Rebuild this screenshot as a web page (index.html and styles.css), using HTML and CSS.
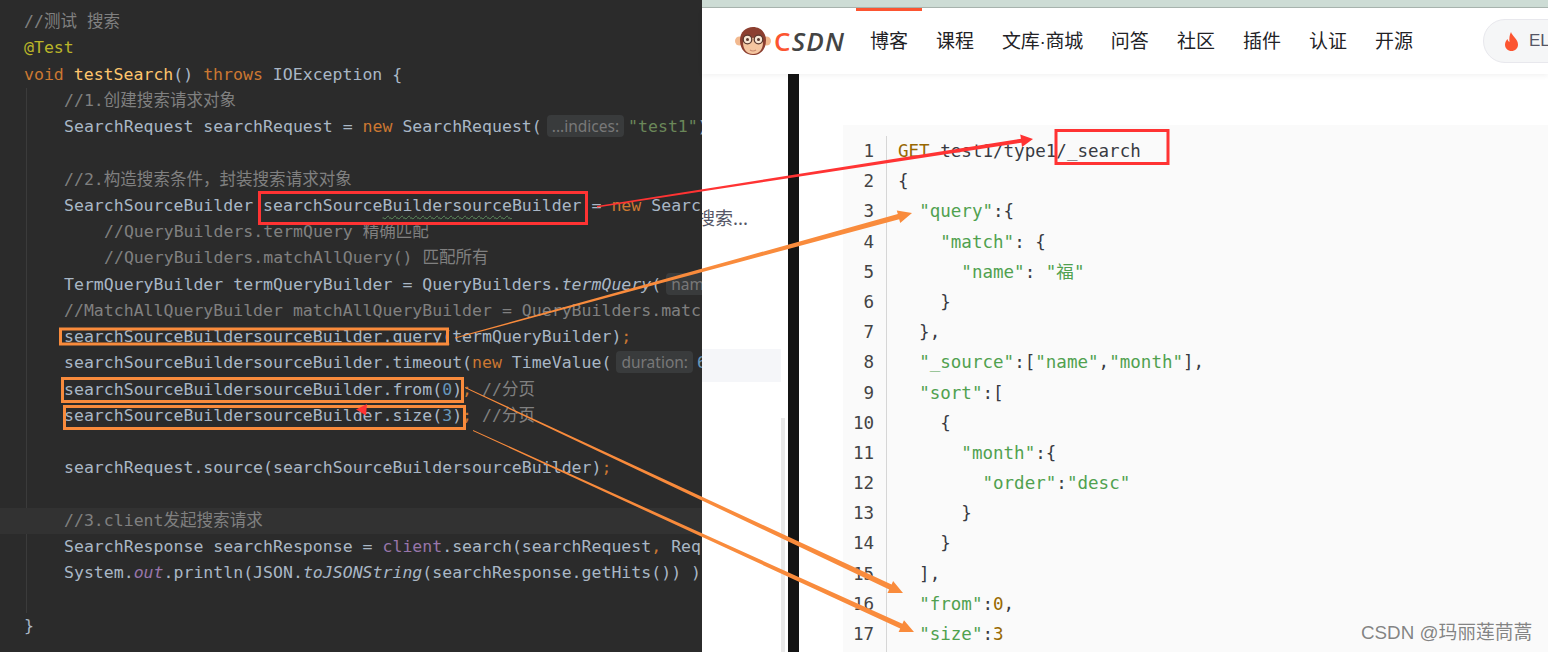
FILE: index.html
```html
<!DOCTYPE html>
<html lang="zh-CN">
<head>
<meta charset="utf-8">
<title>CSDN</title>
<link rel="stylesheet" href="styles.css">
</head>
<body>
<div class="stage">
  <section class="editor">
    <div class="ln c">//测试 搜索</div>
    <div class="ln a">@Test</div>
    <div class="ln"><span class="k">void</span> <span class="f">testSearch</span>() <span class="k">throws</span> IOException {</div>
    <div class="body">
      <div class="ln c">//1.创建搜索请求对象</div>
      <div class="ln">SearchRequest searchRequest = <span class="k">new</span> SearchRequest(<span class="hint">...indices:</span><span class="s">"test1"</span>);</div>
      <div class="ln"></div>
      <div class="ln c">//2.构造搜索条件，封装搜索请求对象</div>
      <div class="ln">SearchSourceBuilder searchSource<span class="wavy">Buildersource</span>Builder = <span class="k">new</span> SearchSourceBuilder();</div>
      <div class="ln c nest">//QueryBuilders.termQuery 精确匹配</div>
      <div class="ln c nest">//QueryBuilders.matchAllQuery() 匹配所有</div>
      <div class="ln">TermQueryBuilder termQueryBuilder = QueryBuilders.<i>termQuery</i>(<span class="hint">name:</span><span class="s">"name"</span>);</div>
      <div class="ln c">//MatchAllQueryBuilder matchAllQueryBuilder = QueryBuilders.matchAllQuery();</div>
      <div class="ln">searchSourceBuildersourceBuilder.query(termQueryBuilder)<span class="k">;</span></div>
      <div class="ln">searchSourceBuildersourceBuilder.timeout(<span class="k">new</span> TimeValue(<span class="hint">duration:</span><span class="n">60</span>, TimeUnit.SECONDS));</div>
      <div class="ln">searchSourceBuildersourceBuilder.from(<span class="n">0</span>)<span class="k">;</span> <span class="c">//分页</span></div>
      <div class="ln">searchSourceBuildersourceBuilder.size(<span class="n">3</span>)<span class="k">;</span> <span class="c">//分页</span></div>
      <div class="ln"></div>
      <div class="ln">searchRequest.source(searchSourceBuildersourceBuilder)<span class="k">;</span></div>
      <div class="ln"></div>
      <div class="ln c current">//3.client发起搜索请求</div>
      <div class="ln">SearchResponse searchResponse = <span class="p">client</span>.search(searchRequest<span class="k">,</span> RequestOptions.DEFAULT);</div>
      <div class="ln">System.<i class="p">out</i>.println(JSON.<i>toJSONString</i>(searchResponse.getHits()) );</div>
      <div class="ln"></div>
    </div>
    <div class="ln">}</div>
  </section>

  <section class="browser">
    <div class="strip"></div>
    <header class="nav">
      <div class="logo">
        <svg class="monkey" width="36" height="30" viewBox="0 0 36 30">
          <circle cx="4.500" cy="15" r="4.500" fill="#f2b98f"/>
          <circle cx="31.500" cy="15" r="4.500" fill="#f2b98f"/>
          <path d="M18 1C25 1 31 6 31 14C31 24 25 29 18 29C11 29 5 24 5 14C5 6 11 1 18 1Z" fill="#8c3f30"/>
          <path d="M8 16C8 11 13 10 18 12C23 10 28 11 28 16C28 24 24 28 18 28C12 28 8 24 8 16Z" fill="#f5c6a0"/>
          <circle cx="12.500" cy="13.500" r="4.300" fill="#f8e6d4" stroke="#5a3a30" stroke-width="1.300"/>
          <circle cx="23.500" cy="13.500" r="4.300" fill="#f8e6d4" stroke="#5a3a30" stroke-width="1.300"/>
          <circle cx="12.500" cy="13.500" r="1.500" fill="#5a3a30"/>
          <circle cx="23.500" cy="13.500" r="1.500" fill="#5a3a30"/>
          <path d="M15 24Q18 26 21 24" fill="none" stroke="#c98a70" stroke-width="1.200"/>
        </svg>
        <span class="wordmark"><span class="wm-c">C</span>SDN</span>
      </div>
      <nav class="menu">
        <a class="item active">博客</a>
        <a class="item">课程</a>
        <a class="item item-wide">文库·商城</a>
        <a class="item">问答</a>
        <a class="item">社区</a>
        <a class="item">插件</a>
        <a class="item">认证</a>
        <a class="item">开源</a>
      </nav>
      <div class="pill">
        <svg width="15" height="19" viewBox="0 0 15 19"><path d="M7 0C8 4 14 7 14 12.500C14 16.500 11 19 7.500 19C4 19 1 16.500 1 12.500C1 10 2.500 8 3.500 7C3.800 8.500 4.500 9.500 5.500 10C5 6.500 5.500 3 7 0Z" fill="#fc5531"/></svg>
        <span class="pill-text">ELECTRON</span>
      </div>
    </header>
    <div class="content">
      <aside class="side">
        <div class="side-text">搜索...</div>
        <div class="side-row"></div>
        <div class="side-scroll"></div>
      </aside>
      <div class="darkbar"></div>
      <div class="article">
        <div class="codeblock">
          <ol class="nums">
            <li>1</li><li>2</li><li>3</li><li>4</li><li>5</li><li>6</li><li>7</li><li>8</li><li>9</li><li>10</li><li>11</li><li>12</li><li>13</li><li>14</li><li>15</li><li>16</li><li>17</li>
          </ol>
          <div class="json">
            <div class="jl"><span class="b">GET</span> test1/type1/_search</div>
            <div class="jl">{</div>
            <div class="jl">  <span class="g">"query"</span>:{</div>
            <div class="jl">    <span class="g">"match"</span>: {</div>
            <div class="jl">      <span class="g">"name"</span>: <span class="g">"福"</span></div>
            <div class="jl">    }</div>
            <div class="jl">  },</div>
            <div class="jl">  <span class="g">"_source"</span>:[<span class="g">"name"</span>,<span class="g">"month"</span>],</div>
            <div class="jl">  <span class="g">"sort"</span>:[</div>
            <div class="jl">    {</div>
            <div class="jl">      <span class="g">"month"</span>:{</div>
            <div class="jl">        <span class="g">"order"</span>:<span class="g">"desc"</span></div>
            <div class="jl">      }</div>
            <div class="jl">    }</div>
            <div class="jl">  ],</div>
            <div class="jl">  <span class="g">"from"</span>:<span class="b">0</span>,</div>
            <div class="jl">  <span class="g">"size"</span>:<span class="b">3</span></div>
          </div>
        </div>
      </div>
    </div>
  </section>

  <svg class="marks" width="1548" height="652" viewBox="0 0 1548 652">
    <g class="box-red">
      <rect x="259.500" y="192.500" width="327" height="31"/>
      <rect x="1056" y="130.500" width="112" height="33"/>
    </g>
    <g class="box-orange">
      <rect x="60.500" y="329" width="387" height="15"/>
      <rect x="62.500" y="378.500" width="400" height="23"/>
      <rect x="64.500" y="406.500" width="400" height="22"/>
    </g>
    <polygon class="fill-red" points="597,206 1021,138.800 1020.200,134.500 1033,139 1022,147 1021.400,142.800 597,207.500"/>
    <polygon class="fill-red" points="356,409.500 367,404 366,415.500"/>
    <polygon class="fill-orange" points="455,337.500 897.800,214 896.800,210.400 912,213 900.200,223 899.200,219.200 455,338.500"/>
    <polygon class="fill-orange" points="465,387 891.600,584.600 893.100,581.100 903,593 887.500,592.900 889.200,589.400 465,388"/>
    <polygon class="fill-orange" points="473,430 902.400,623.800 904,620.300 914,632 898.600,632.100 900.200,628.600 473,431"/>
  </svg>
  <div class="watermark">CSDN @玛丽莲茼蒿</div>
</div>
</body>
</html>
```
FILE: styles.css
```css
* { box-sizing: border-box; }
html, body { margin: 0; padding: 0; background: #fff; }
.stage {
  position: relative;
  display: flex;
  width: 1548px;
  height: 652px;
  overflow: hidden;
}

/* IDE pane */
.editor {
  flex: 0 0 702px;
  height: 652px;
  padding: 9px 0 0 24px;
  overflow: hidden;
  background: #2b2b2b;
  color: #a9b7c6;
  font: 16.55px/26.26px "DejaVu Sans Mono", "Noto Sans CJK SC", monospace;
}
.ln { height: 26.26px; white-space: pre; }
.body {
  margin-left: 2px;
  padding-left: 37px;
  border-left: 1px solid #3b3b3b;
}
.nest { padding-left: 40px; }
.current {
  margin-left: -64px;
  padding-left: 64px;
  background: #323232;
}
.c { color: #808080; }
.a { color: #bbb529; }
.k { color: #cc7832; }
.f { color: #ffc66d; }
.s { color: #6a8759; }
.n { color: #6897bb; }
.p { color: #9876aa; }
.wavy { text-decoration: underline wavy #5f8f5f 1px; text-underline-offset: 4px; }
.hint {
  display: inline-block;
  height: 22px;
  margin: 0 4px 0 5px;
  padding: 0 5px;
  border-radius: 4px;
  background: #393b3c;
  color: #787878;
  font: 15.5px/22px "Noto Sans", "Liberation Sans", sans-serif;
  vertical-align: 0;
}

/* Browser pane */
.browser {
  flex: 1;
  display: flex;
  flex-direction: column;
  min-width: 0;
  height: 652px;
  background: #fff;
}
.strip {
  flex: 0 0 8px;
  background: #cddcd5;
  border-bottom: 1px solid #a9b5af;
}
.nav {
  position: relative;
  z-index: 1;
  flex: 0 0 66px;
  display: flex;
  align-items: center;
  padding-left: 33px;
  background: #fff;
  box-shadow: 0 2px 5px rgba(0, 0, 0, .05);
  white-space: nowrap;
}
.logo {
  flex: 0 0 121px;
  display: flex;
  align-items: center;
  height: 100%;
  margin-top: -1px;
}
.monkey { flex: none; }
.wordmark {
  margin-left: 3px;
  color: #444;
  font: italic 600 26px/30px "Open Sans", sans-serif;
  letter-spacing: 1.2px;
}
.wm-c { color: #fc5531; font-style: normal; }
.menu { display: flex; height: 100%; }
.item {
  display: flex;
  align-items: center;
  height: 100%;
  padding: 2px 14px 0;
  color: #222226;
  font: 19px/24px "Liberation Sans", "Noto Sans CJK SC", sans-serif;
}
.item-wide { letter-spacing: -.3px; }
.item.active { border-top: 3px solid #fc5531; padding-top: 0; padding-bottom: 1px; }
.pill {
  display: flex;
  flex: none;
  align-items: center;
  gap: 10px;
  width: 200px;
  height: 44px;
  margin-left: 56px;
  padding-left: 20px;
  border: 1px solid #e8e8ed;
  border-radius: 22px;
  background: #f5f6f7;
}
.pill-text { color: #555666; font: 17px/24px "Liberation Sans", sans-serif; }
.content {
  flex: 1;
  display: flex;
  min-height: 0;
}
.side {
  position: relative;
  flex: 0 0 86px;
  overflow: hidden;
  background: #fff;
}
.side-text {
  margin: 130px 0 0 -5px;
  height: 26px;
  color: #555666;
  font: 18px/26px "Noto Sans CJK SC", sans-serif;
  white-space: nowrap;
}
.side-row {
  width: 79px;
  height: 33px;
  margin-top: 119px;
  background: #f5f6f9;
}
.side-scroll {
  position: absolute;
  top: 344px;
  right: 3px;
  width: 4px;
  height: 240px;
  background: #e9e9e9;
}
.darkbar { flex: 0 0 11px; background: #141414; }
.article {
  flex: 1;
  min-width: 0;
  padding: 51px 0 0 44px;
  overflow: hidden;
}
.codeblock {
  display: flex;
  height: 530px;
  padding-top: 11px;
  background: #fafafa;
  font: 17.55px/30.2px "DejaVu Sans Mono", "Noto Sans CJK SC", monospace;
}
.nums {
  flex: 0 0 43px;
  margin: 0;
  padding: 0 12px 0 0;
  list-style: none;
  text-align: right;
  color: #444;
}
.nums li { height: 30.2px; }
.json {
  flex: 1;
  padding: 0 0 0 11px;
  border-left: 1px solid #d6d6d6;
  color: #383a42;
}
.jl { height: 30.2px; white-space: pre; }
.g { color: #50a14f; }
.b { color: #986801; }

/* Screenshot annotations */
.marks { position: absolute; top: 0; left: 0; pointer-events: none; }
.box-red rect { fill: none; stroke: #f33; stroke-width: 3; }
.box-orange rect { fill: none; stroke: #f98b3c; stroke-width: 3; }
.fill-red { fill: #f33; }
.fill-orange { fill: #f98b3c; }
.watermark {
  position: absolute;
  top: 620px;
  left: 1361px;
  color: rgba(110, 110, 110, .85);
  font: 18.8px/26px "Liberation Sans", "Noto Sans CJK SC", sans-serif;
  white-space: nowrap;
}
```
